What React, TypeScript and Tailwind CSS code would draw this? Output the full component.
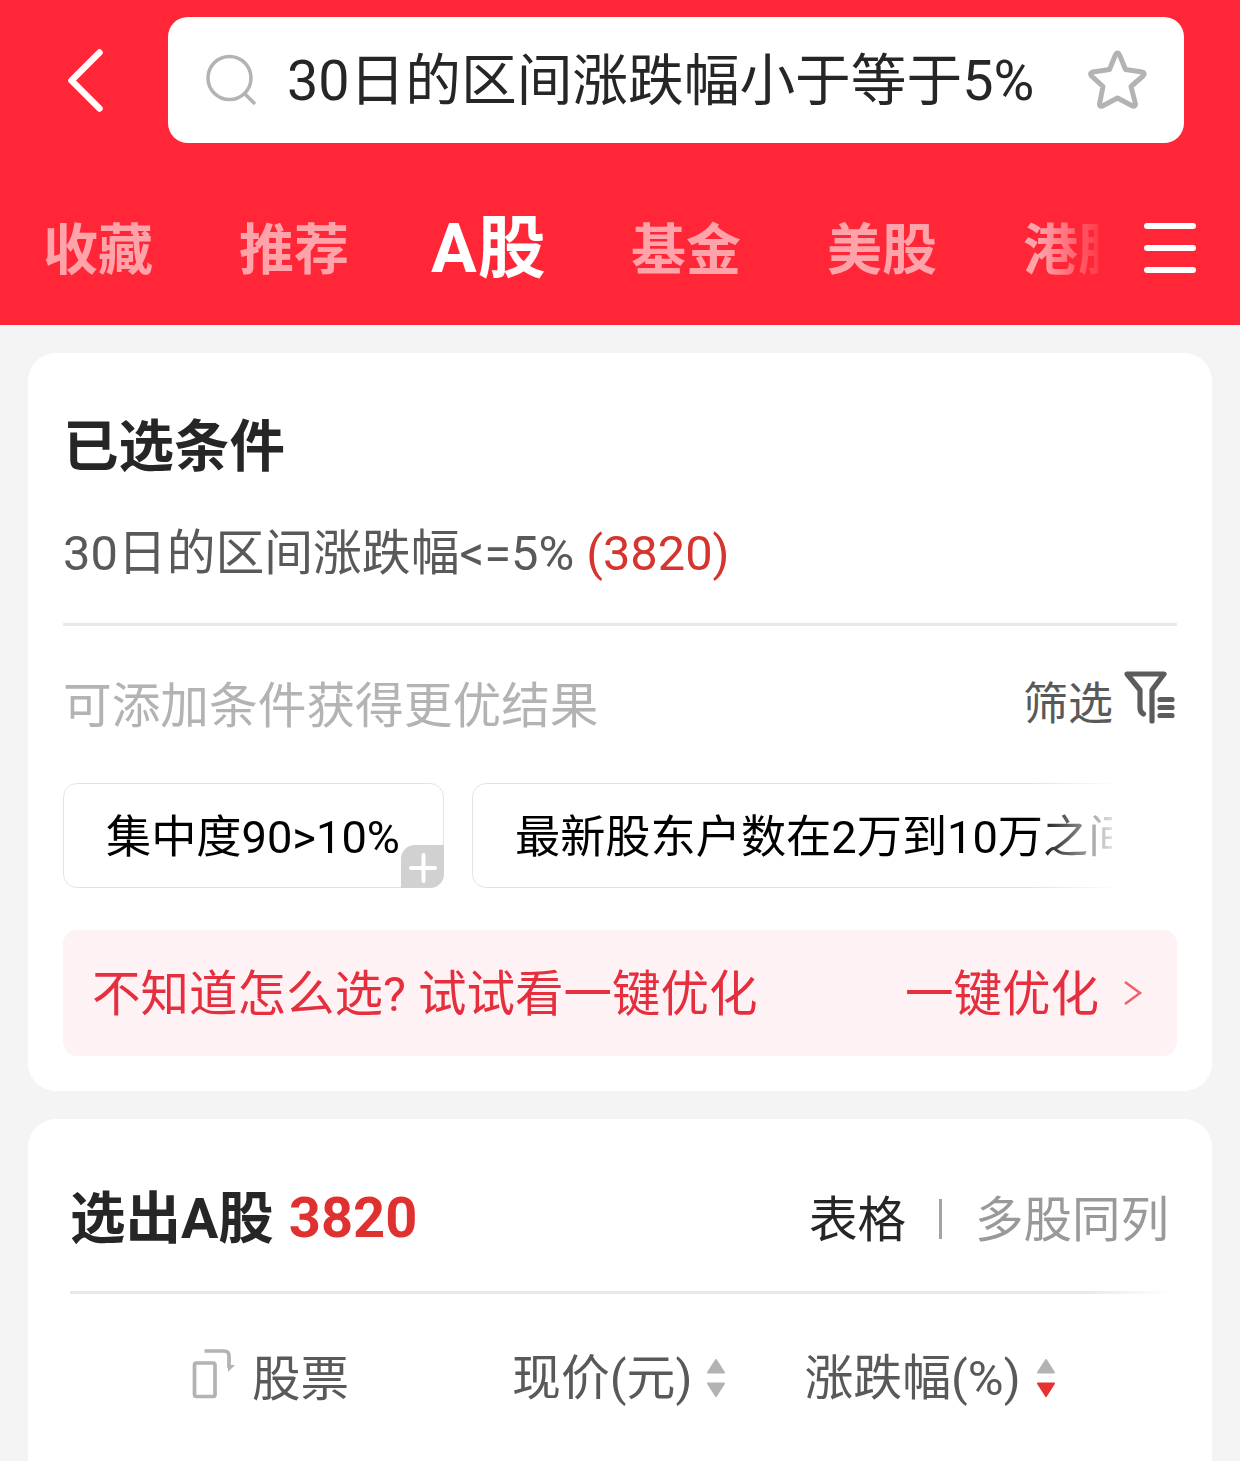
import React from "react";

const inactiveTab = "mt-[4px] w-[196px] shrink-0 text-[55px] font-bold text-[#ffa3aa]";

function SortArrows({ active = false }: { active?: boolean }) {
  return (
    <svg className="shrink-0" width="20" height="40" viewBox="0 0 20 40" strokeLinejoin="round" strokeWidth="2">
      <path d="M10 2 18 14.5H2Z" fill="#b3b3b3" stroke="#b3b3b3" />
      <path d="M10 38 18 25.5H2Z" fill={active ? "#e63232" : "#b3b3b3"} stroke={active ? "#e63232" : "#b3b3b3"} />
    </svg>
  );
}

function Header() {
  return (
    <header className="h-[325px] bg-[#ff2737] pt-[17px]">
      <div className="flex h-[126px] items-center">
        <svg className="ml-[60px] shrink-0" width="50" height="70" viewBox="0 0 50 70" fill="none" stroke="white" strokeWidth="6.5" strokeLinecap="round" strokeLinejoin="round">
          <path d="M39.500 7.500 11.500 35.500 39.500 63.500" />
        </svg>
        <div className="ml-[58px] flex h-[126px] w-[1016px] items-center rounded-[20px] bg-white pl-[36px]">
          <svg className="shrink-0" width="56" height="56" viewBox="0 0 56 56" fill="none" stroke="#b3b3b3" strokeWidth="3.500">
            <circle cx="25.500" cy="26" r="21.500" />
            <path d="m41 42 10 10" />
          </svg>
          <span className="ml-[27px] mt-[3px] w-[790px] text-[55.7px] text-[#262626]">30日的区间涨跌幅小于等于5%</span>
          <svg className="shrink-0" width="80" height="70" viewBox="0 0 80 70" fill="none" stroke="#b3b3b3" strokeWidth="5" strokeLinejoin="round">
            <path d="M40.500 8 Q42 8 43 11L48.500 24.500 65 27Q69 28 66 31L54 41.500 58.500 59Q58.500 62 55.500 61L40.500 53 25.500 61Q22 62 22.500 59L26 41.500 14.500 31Q12 28 16 27L32.500 24.500 38 11Q39 8 40.500 8Z" />
          </svg>
        </div>
      </div>
      <nav className="mt-[59px] flex h-[92px] items-center">
        <div className="flex h-[92px] w-[1098px] items-center overflow-hidden whitespace-nowrap pl-[43px] [mask-image:linear-gradient(to_right,black_1040px,transparent_1110px)]">
          <span className={inactiveTab}>收藏</span>
          <span className={inactiveTab}>推荐</span>
          <span className="-ml-[4px] mr-[4px] mt-[2px] w-[196px] shrink-0 text-[68px] font-bold tracking-[1px] text-white">A股</span>
          <span className={inactiveTab}>基金</span>
          <span className={inactiveTab}>美股</span>
          <span className={inactiveTab}>港股</span>
        </div>
        <div className="ml-[46px] flex w-[52px] flex-col gap-[16px]">
          <i className="h-[6px] rounded-full bg-white" />
          <i className="h-[6px] rounded-full bg-white" />
          <i className="h-[6px] rounded-full bg-white" />
        </div>
      </nav>
    </header>
  );
}

function ConditionsCard() {
  return (
    <section className="h-[738px] rounded-[28px] bg-white px-[35px] pt-[52px]">
      <h2 className="flex h-[80px] items-center pt-[5px] text-[55.5px] font-bold text-[#262626]">已选条件</h2>
      <div className="mt-[28px] flex h-[80px] items-center whitespace-pre pt-[2px] text-[48.8px] text-[#595959]">
        <span>30日的区间涨跌幅&lt;=5%</span>
        <span className="ml-[12px] text-[#d6342f]">(3820)</span>
      </div>
      <div className="mt-[30px] h-[3px] bg-[#e8e8e8]" />
      <div className="mt-[38px] flex h-[80px] items-center text-[48.7px]">
        <span className="mt-[6px] text-[#b3b3b3]">可添加条件获得更优结果</span>
        <span className="ml-auto text-[45px] text-[#595959]">筛选</span>
        <svg className="-mt-[15px] ml-[8px] shrink-0" width="56" height="56" viewBox="0 0 56 56" fill="none" stroke="#5c5c5c" strokeWidth="5.200" strokeLinecap="round" strokeLinejoin="round">
          <path d="M31 52V21L43 5H6L19 21V39Q19 43 22.500 45" />
          <path d="M39 30.500H51M39 38.500H51M39 46.500H51" />
        </svg>
      </div>
      <div className="mt-[39px] flex h-[105px] w-[1049px] gap-[28px] overflow-hidden whitespace-nowrap text-[45.2px] text-black [mask-image:linear-gradient(to_right,black_970px,transparent_1060px)]">
        <div className="relative flex w-[381px] shrink-0 items-center rounded-[14px] border border-[#e3e3e3] pl-[42px] pt-[5px]">
          <span>集中度90&gt;10%</span>
          <span className="absolute -bottom-px -right-px flex h-[43px] w-[43px] items-center justify-center rounded-br-[14px] rounded-tl-[14px] bg-[#d1d1d1]">
            <svg width="30" height="34" viewBox="0 0 30 34" stroke="white" strokeWidth="4" strokeLinecap="round">
              <path d="M3 18H27M15.500 5V31" />
            </svg>
          </span>
        </div>
        <div className="flex w-[760px] shrink-0 items-center rounded-[14px] border border-[#e3e3e3] pl-[42px] pt-[5px]">
          最新股东户数在2万到10万之间
        </div>
      </div>
      <div className="mt-[42px] flex h-[126px] items-center rounded-[14px] bg-[#fff2f4] pl-[29px] pr-[32px] text-[48.5px] text-[#e62f3e]">
        <span className="mt-[4px]">不知道怎么选? 试试看一键优化</span>
        <span className="ml-auto mt-[4px]">一键优化</span>
        <svg className="ml-[22px] shrink-0" width="24" height="30" viewBox="0 0 24 30" fill="none" stroke="#f0606b" strokeWidth="2.500">
          <path d="m4 4 15 11-15 11" />
        </svg>
      </div>
    </section>
  );
}

function ResultsCard() {
  return (
    <section className="mt-[28px] h-[342px] rounded-t-[28px] bg-white pl-[42px] pt-[59px]">
      <div className="flex h-[80px] items-center pr-[43px] text-[48.5px]">
        <h2 className="mt-[3px] text-[55.5px] font-bold text-[#262626]">选出A股</h2>
        <span className="ml-[15px] text-[56px] font-bold text-[#e03131]">3820</span>
        <span className="ml-auto mt-[6px] text-[#262626]">表格</span>
        <i className="ml-[33px] mt-[2px] h-[40px] w-[3px] bg-[#a3a3a3]" />
        <span className="ml-[33px] mt-[6px] text-[#999999]">多股同列</span>
      </div>
      <div className="mt-[33px] h-[3px] w-[1102px] bg-linear-to-r from-[#e8e8e8] from-92% to-white" />
      <div className="mt-[44px] flex h-[80px] items-center text-[48.5px] text-[#595959]">
        <svg className="-mt-[8px] ml-[120px] shrink-0" width="48" height="56" viewBox="0 0 48 56" fill="none" stroke="#b3b3b3" strokeWidth="3.700" strokeLinejoin="round">
          <rect x="4.500" y="17" width="20.500" height="33.500" rx="2" />
          <path d="M14.500 5H34Q39 5 39 10V22" />
          <path d="M38 19H45L38 26Z" fill="#b3b3b3" stroke="none" />
        </svg>
        <span className="ml-[14px] mt-[4px] w-[260px]">股票</span>
        <span className="mr-[14px] mt-[2px] text-[48.9px]">现价(元)</span>
        <SortArrows />
        <span className="ml-[78px] mr-[15px] mt-[2px] text-[48.9px]">涨跌幅(%)</span>
        <SortArrows active />
      </div>
    </section>
  );
}

export default function App() {
  return (
    <div className="h-[1461px] w-[1240px] overflow-hidden whitespace-nowrap bg-[#f4f4f4] font-[Roboto,'Noto_Sans_CJK_SC',sans-serif] leading-none">
      <Header />
      <main className="px-[28px] pt-[28px]">
        <ConditionsCard />
        <ResultsCard />
      </main>
    </div>
  );
}
